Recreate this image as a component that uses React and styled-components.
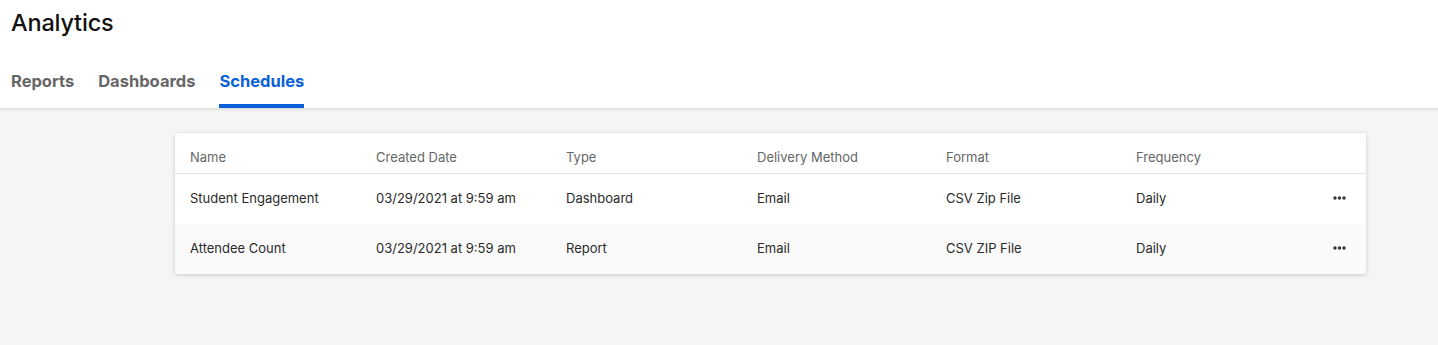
import React from "react";
import styled, { createGlobalStyle } from "styled-components";

const GlobalStyle = createGlobalStyle`
  body {
    margin: 0;
    background: #f5f5f5;
    font-family: Inter, "Liberation Sans", sans-serif;
  }
`;

const Page = styled.div`
  min-height: 345px;
  background: #f5f5f5;
`;

const Header = styled.header`
  background: #fff;
  padding: 0 11px;
  box-shadow: 0 1px 3px rgba(0, 0, 0, 0.15);
  position: relative;
`;

const Title = styled.h1`
  margin: 0;
  padding-top: 8px;
  height: 56px;
  font-size: 23.5px;
  font-weight: 500;
  color: #111;
  line-height: 30px;
  letter-spacing: -0.2px;
`;

const Tabs = styled.nav`
  display: flex;
  gap: 24px;
`;

const Tab = styled.a`
  display: block;
  height: 44px;
  line-height: 35px;
  box-sizing: border-box;
  font-size: 16.5px;
  font-weight: 700;
  color: ${(p) => (p.$active ? "#0a60d8" : "#666")};
  border-bottom: 4px solid ${(p) => (p.$active ? "#0a60d8" : "transparent")};
  cursor: pointer;
`;

const Main = styled.main`
  padding: 25px 72px 0 175px;
`;

const Card = styled.div`
  background: #fff;
  border-radius: 3px;
  box-shadow: 0 1px 4px rgba(0, 0, 0, 0.18);
  overflow: hidden;
`;

const Row = styled.div`
  display: grid;
  grid-template-columns: 186px 190px 191px 189px 190px 1fr 40px;
  align-items: ${(p) => (p.$head ? "end" : "center")};
  padding: ${(p) => (p.$head ? "0 0 8px 15px" : "0 0 3px 15px")};
  height: ${(p) => (p.$head ? "41px" : "50px")};
  box-sizing: border-box;
  background: ${(p) => (p.$alt ? "#fafafa" : "#fff")};
  border-bottom: ${(p) => (p.$head ? "1px solid #e0e0e0" : "none")};
  font-size: 13px;
  line-height: 16px;
  color: ${(p) => (p.$head ? "#666" : "#2a2a2a")};
`;

const Cell = styled.div`
  white-space: nowrap;
`;

const ActionCell = styled.div`
  display: flex;
  justify-content: flex-end;
  padding-right: 20px;
`;

const MoreButton = styled.button`
  border: none;
  background: none;
  padding: 0;
  display: flex;
  cursor: pointer;
`;

const Dots = () => (
  <svg width="13" height="4" viewBox="0 0 13 4">
    <circle cx="2" cy="2" r="1.7" fill="#333" />
    <circle cx="6.5" cy="2" r="1.7" fill="#333" />
    <circle cx="11" cy="2" r="1.7" fill="#333" />
  </svg>
);

const rows = [
  ["Student Engagement", "03/29/2021 at 9:59 am", "Dashboard", "Email", "CSV Zip File", "Daily"],
  ["Attendee Count", "03/29/2021 at 9:59 am", "Report", "Email", "CSV ZIP File", "Daily"],
];

export default function App() {
  return (
    <Page>
      <GlobalStyle />
      <Header>
        <Title>Analytics</Title>
        <Tabs>
          <Tab>Reports</Tab>
          <Tab>Dashboards</Tab>
          <Tab $active>Schedules</Tab>
        </Tabs>
      </Header>
      <Main>
        <Card>
          <Row $head>
            <Cell>Name</Cell>
            <Cell>Created Date</Cell>
            <Cell>Type</Cell>
            <Cell>Delivery Method</Cell>
            <Cell>Format</Cell>
            <Cell>Frequency</Cell>
            <Cell />
          </Row>
          {rows.map((r, i) => (
            <Row key={i} $alt={i % 2 === 1}>
              {r.map((c, j) => (
                <Cell key={j}>{c}</Cell>
              ))}
              <ActionCell>
                <MoreButton aria-label="More">
                  <Dots />
                </MoreButton>
              </ActionCell>
            </Row>
          ))}
        </Card>
      </Main>
    </Page>
  );
}
